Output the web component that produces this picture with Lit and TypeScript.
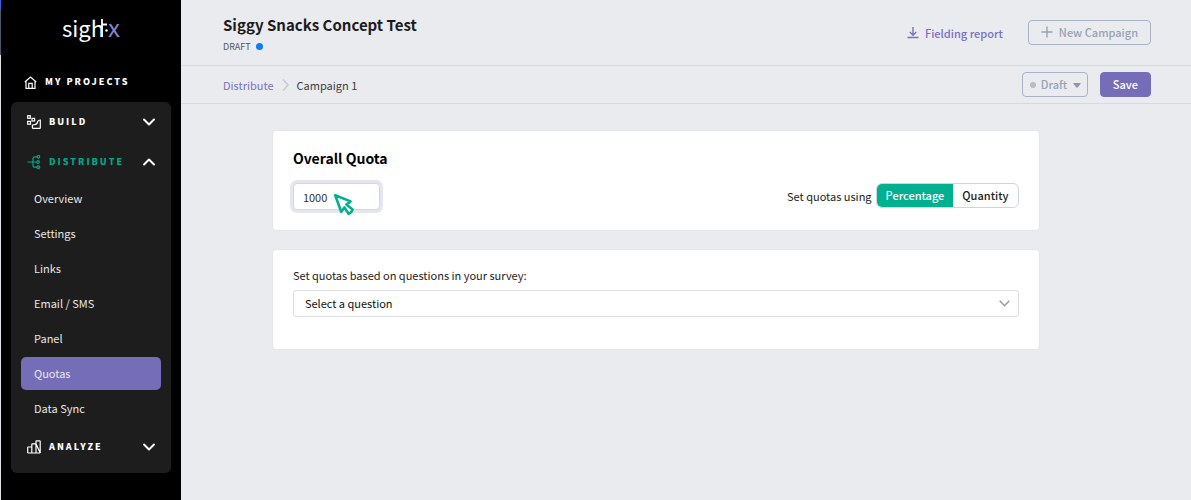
import { LitElement, html, css, svg } from "lit";
import { customElement, property, state } from "lit/decorators.js";
import { classMap } from "lit/directives/class-map.js";

const FONT = css`"Noto Sans CJK SC", "Noto Sans", sans-serif`;

const icons = {
  home: svg`<path d="M0.8 6 6.5 1 12.2 6M2 5.2V12.4H11V5.2M4.8 12.4V7.4H8.2V12.4" />`,
  build: svg`<rect x="0.7" y="0.7" width="2.6" height="2.6" /><rect x="0.7" y="6.4" width="2.8" height="2.8" /><rect x="5" y="3.4" width="2.6" height="2.6" /><path d="M5.4 10.2V12.8Q5.4 13.3 5.9 13.3H12.7Q13.3 13.3 13.3 12.7V5Q11.6 5 10.6 6.6Q10.4 9.4 7.6 9.6Q6 9.6 5.4 10.2Z" />`,
  distribute: svg`<path d="M0.5 7H9.6M10 1.8H8Q6 1.8 6 3.8V10.2Q6 12.2 8 12.2H10" /><circle cx="11.4" cy="1.8" r="1.3" /><circle cx="11" cy="7" r="1.3" /><circle cx="11.4" cy="12.2" r="1.3" />`,
  analyze: svg`<path d="M0.7 13V7.6Q0.7 7 1.3 7H4.8V13M4.8 7V4.4Q4.8 3.8 5.4 3.8H9V13M9 3.8V1.4Q9 0.8 9.6 0.8H12.6Q13.2 0.8 13.2 1.4V13ZM0.7 13H13.2" />`,
};

@customElement("side-nav")
class SideNav extends LitElement {
  @property() current = "Quotas";

  static styles = css`
    :host { display: block; background: #000; color: #fff; font-family: ${FONT}; }
    .logo { display: block; margin: 10px auto 0; overflow: visible; }
    .logo-text { font-family: "Noto Sans CJK SC", sans-serif; font-size: 22px; font-weight: 400; fill: #fff; }
    .logo-x { font-size: 24px; fill: #8a80cf; }
    .logo-stem { stroke: #fff; stroke-width: 1.8; }
    .icon { flex: none; fill: none; stroke: currentColor; stroke-width: 1.2; }
    .home { display: flex; align-items: center; gap: 8px; height: 40px; margin-top: 12px; padding: 0 24px 0 23px; }
    .caps { font-size: 9px; line-height: 16px; font-weight: 900; letter-spacing: 2px; text-transform: uppercase; }
    a, button { color: inherit; text-decoration: none; font-family: inherit; }
    .group { margin: 0 10px; padding-bottom: 6px; background: #1d1d1d; border-radius: 6px; }
    .row { display: flex; align-items: center; gap: 8px; box-sizing: border-box; width: 100%; height: 40px; padding: 0 16px; border: 0; background: none; text-align: left; }
    .row .caps { flex: 1; }
    .row.open .caps, .row.open .lead { color: #00a886; }
    .chevron { stroke-width: 2; stroke-linecap: round; stroke-linejoin: round; }
    ul { display: grid; gap: 2px; margin: 0 10px 2px; padding: 0; list-style: none; }
    .item { display: block; padding: 0 13px; border-radius: 5px; font-size: 11px; line-height: 33px; color: #e8e8ea; }
    .item.active { background: #766db9; }
  `;

  row(label: string, icon: unknown, open = false) {
    return html`<button class=${classMap({ row: true, open })} aria-expanded=${open}>
      <svg class="icon lead" width="14" height="14" viewBox="0 0 14 14">${icon}</svg>
      <span class="caps">${label}</span>
      <svg class="icon chevron" width="12" height="8" viewBox="0 0 12 8"><path d=${open ? "M1 6.5 6 1.5 11 6.5" : "M1 1.5 6 6.5 11 1.5"} /></svg>
    </button>`;
  }

  render() {
    const pages = ["Overview", "Settings", "Links", "Email / SMS", "Panel", "Quotas", "Data Sync"];
    return html`
      <svg class="logo" width="58" height="40" viewBox="0 0 58 40" role="img" aria-label="sightx">
        <text class="logo-text" x="0" y="27">sigh</text>
        <path class="logo-stem" d="M40 9V27M40 14.5H45" />
        <circle cx="44.5" cy="20.5" r="1.2" fill="#fff" />
        <text class="logo-text logo-x" x="46" y="27">x</text>
      </svg>
      <a class="home" href="#projects">
        <svg class="icon" width="13" height="13" viewBox="0 0 13 13">${icons.home}</svg>
        <span class="caps">My Projects</span>
      </a>
      <div class="group">
        ${this.row("Build", icons.build)}
        ${this.row("Distribute", icons.distribute, true)}
        <ul>
          ${pages.map((p) => html`<li><a href="#page" class=${classMap({ item: true, active: p === this.current })}>${p}</a></li>`)}
        </ul>
        ${this.row("Analyze", icons.analyze)}
      </div>
    `;
  }
}

@customElement("campaign-header")
class CampaignHeader extends LitElement {
  static styles = css`
    :host { display: block; font-family: ${FONT}; font-size: 11px; line-height: 16px; }
    .bar { display: flex; align-items: center; justify-content: space-between; box-sizing: border-box; padding: 0 40px 0 42px; border-bottom: 1px solid #d6d9df; }
    .top { height: 66px; }
    .sub { height: 38px; }
    h1 { margin: 0; padding-top: 4px; font-size: 15px; line-height: 24px; font-weight: 700; color: #1c1c1e; }
    .status { display: flex; align-items: center; gap: 5px; font-size: 9px; line-height: 20px; color: #55585e; }
    .dot { width: 7px; height: 7px; border-radius: 50%; background: #0a7cff; }
    .actions, .crumbs, .report { display: flex; align-items: center; }
    .actions { gap: 12px; }
    .top .actions { gap: 25px; }
    .crumbs { gap: 8px; color: #3b3d42; }
    .report { gap: 6px; font-weight: 500; }
    a { color: #7a70c2; text-decoration: none; }
    .btn, select { height: 25px; box-sizing: border-box; border: 1px solid #a9b3c3; border-radius: 4px; background: none; color: #98a2b5; font: 500 11px/16px ${FONT}; }
    .btn { padding: 0 12px 1px; }
    .new { display: flex; align-items: center; gap: 6px; }
    .save { border-color: #766db9; background: #766db9; color: #fff; }
    .draft { position: relative; display: flex; }
    select { appearance: none; width: 66px; padding: 0 14px 1px 18px; }
    .mark { position: absolute; left: 8px; top: 10px; width: 6px; height: 6px; border-radius: 50%; background: #b9bbc0; pointer-events: none; }
    .caret { position: absolute; right: 7px; top: 11px; fill: #8c97ab; pointer-events: none; }
    .line { fill: none; stroke: currentColor; stroke-width: 1.4; }
    .sep { color: #c3cad5; }
  `;

  render() {
    return html`
      <header class="bar top">
        <div>
          <h1>Siggy Snacks Concept Test</h1>
          <div class="status">DRAFT <span class="dot"></span></div>
        </div>
        <div class="actions">
          <a class="report" href="#report">
            <svg class="line" width="12" height="13" viewBox="0 0 12 13"><path d="M6 1V9M2.8 6 6 9.2 9.2 6M0.5 11.5H11.5" /></svg>
            Fielding report
          </a>
          <button class="btn new">
            <svg class="line" width="12" height="12" viewBox="0 0 12 12"><path d="M6 0.5V11.5M0.5 6H11.5" /></svg>
            New Campaign
          </button>
        </div>
      </header>
      <div class="bar sub">
        <nav class="crumbs" aria-label="Breadcrumb">
          <a href="#distribute">Distribute</a>
          <svg class="line sep" width="7" height="12" viewBox="0 0 7 12"><path d="M1 0.5 6 6 1 11.5" /></svg>
          <span>Campaign 1</span>
        </nav>
        <div class="actions">
          <div class="draft">
            <select aria-label="Campaign status"><option>Draft</option></select>
            <span class="mark"></span>
            <svg class="caret" width="8" height="5" viewBox="0 0 8 5"><path d="M0.8 0H7.2Q8 0 7.6 0.8L4.6 4.5Q4 5 3.4 4.5L0.4 0.8Q0 0 0.8 0Z" /></svg>
          </div>
          <button class="btn save">Save</button>
        </div>
      </div>
    `;
  }
}

@customElement("quota-form")
class QuotaForm extends LitElement {
  @state() mode = "Percentage";

  static styles = css`
    :host { display: grid; gap: 18px; font-family: ${FONT}; font-size: 11px; line-height: 16px; color: #222; }
    .card { box-sizing: border-box; padding: 15px 20px 16px; border: 1px solid #e3e5e9; border-radius: 4px; background: #fff; }
    .title { display: block; font-size: 14px; line-height: 24px; font-weight: 700; color: #000; }
    .split { display: flex; align-items: flex-start; justify-content: space-between; margin-top: 13px; padding-bottom: 4px; }
    .amount { position: relative; display: flex; }
    input[type="text"] { box-sizing: border-box; width: 87px; height: 27px; padding: 0 9px; border: 1px solid #d3d5e3; border-radius: 4px; outline: 0; box-shadow: 0 0 0 3px #e6e6f1; font: 400 11px/16px ${FONT}; color: #333; }
    .pointer { position: absolute; left: 40px; top: 10px; fill: #fff; stroke: #00b08f; stroke-width: 2.6; stroke-linejoin: round; pointer-events: none; }
    fieldset { display: flex; align-items: center; gap: 4px; min-width: 0; margin: 0; padding: 0; border: 0; }
    .toggle { display: flex; overflow: hidden; border: 1px solid #cfd5de; border-radius: 6px; }
    .toggle label { position: relative; padding: 0 9px; line-height: 23px; font-weight: 500; }
    .toggle .on { background: #00b08f; color: #fff; }
    .toggle input { position: absolute; inset: 0; margin: 0; opacity: 0; }
    .questions { padding: 17px 20px 32px; }
    .questions > label { display: block; margin-bottom: 7px; }
    .picker { position: relative; }
    select { appearance: none; display: block; box-sizing: border-box; width: 100%; height: 27px; padding: 0 11px 2px; border: 1px solid #dcdee2; border-radius: 3px; background: #fff; color: #111; font: 400 11px/16px ${FONT}; }
    .down { position: absolute; right: 9px; top: 10px; fill: none; stroke: #96989c; stroke-width: 1.4; pointer-events: none; }
  `;

  render() {
    return html`
      <section class="card">
        <label class="title" for="quota">Overall Quota</label>
        <div class="split">
          <div class="amount">
            <input id="quota" type="text" inputmode="numeric" .value=${"1000"} />
            <svg class="pointer" width="22" height="23" viewBox="0 0 22 23"><path d="M2.2 2.2 17.6 8.4 13.4 11.6 19.6 16.6 18.2 19.2 15.6 20.8 11.4 14.4 8.2 18.8Z" /></svg>
          </div>
          <fieldset>
            <span id="unit">Set quotas using</span>
            <div class="toggle" role="radiogroup" aria-labelledby="unit">
              ${["Percentage", "Quantity"].map((m) => html`<label class=${classMap({ on: this.mode === m })}><input type="radio" name="mode" .checked=${this.mode === m} @change=${() => (this.mode = m)} />${m}</label>`)}
            </div>
          </fieldset>
        </div>
      </section>
      <section class="card questions">
        <label for="question">Set quotas based on questions in your survey:</label>
        <div class="picker">
          <select id="question"><option>Select a question</option></select>
          <svg class="down" width="11" height="7" viewBox="0 0 11 7"><path d="M0.7 0.8 5.5 5.8 10.3 0.8" /></svg>
        </div>
      </section>
    `;
  }
}

@customElement("app-root")
class AppRoot extends LitElement {
  static styles = css`
    :host { display: grid; grid-template-columns: 1px 180px minmax(0, 1fr); min-height: 100vh; background: #eaebef; }
    .edge { background: linear-gradient(#3f63e0 0 9px, #4a5866 9px 55px, #dfe1e6 55px); }
    quota-form { margin: 26px 15% 26px 9%; }
  `;

  render() {
    return html`
      <div class="edge"></div>
      <side-nav current="Quotas"></side-nav>
      <main>
        <campaign-header></campaign-header>
        <quota-form></quota-form>
      </main>
    `;
  }
}
